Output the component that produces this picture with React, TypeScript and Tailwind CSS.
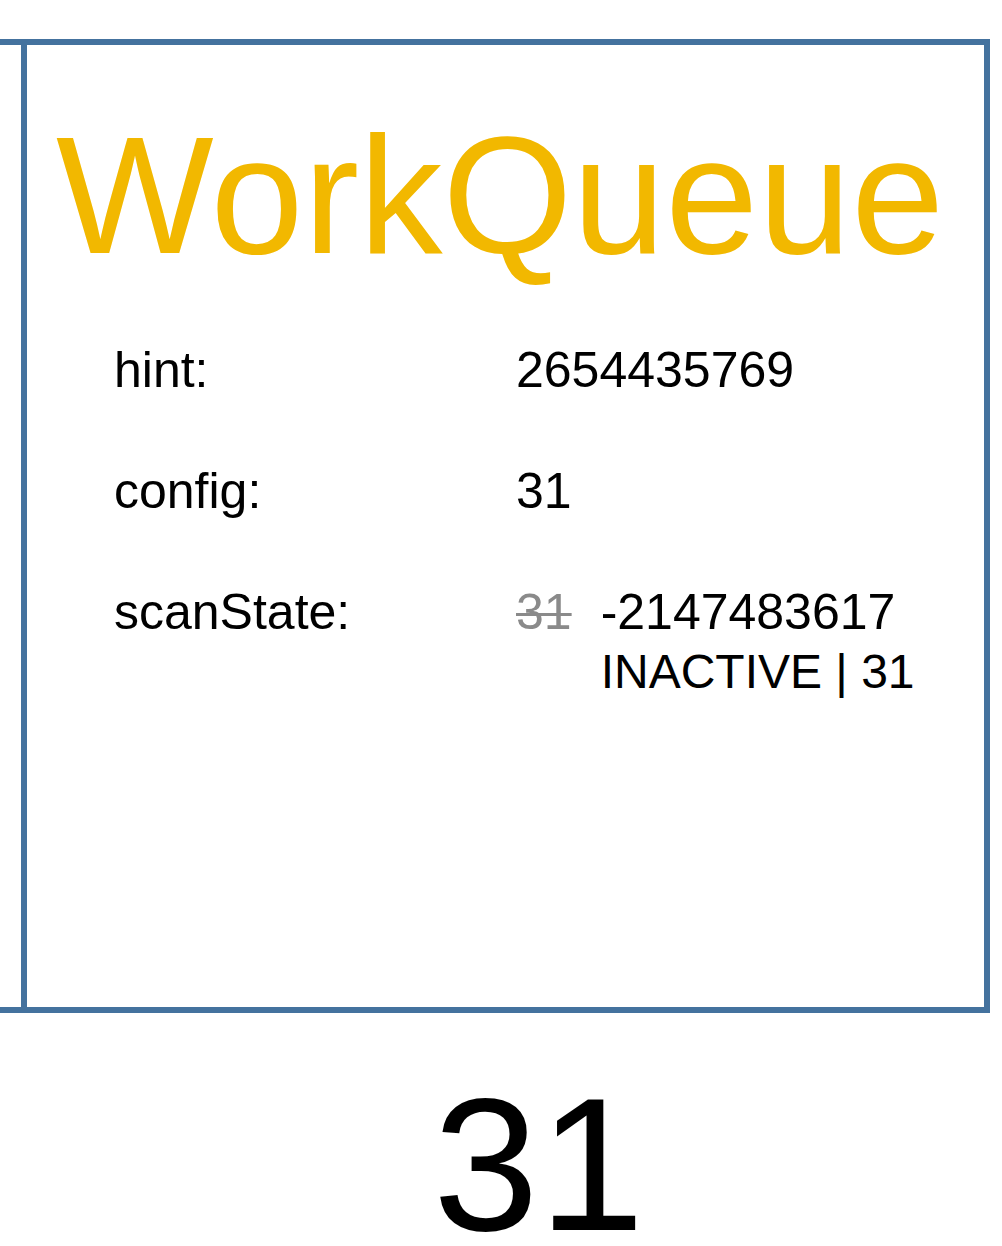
import React from "react";

const rows = [
  { label: "hint:", value: "2654435769" },
  { label: "config:", value: "31" },
];

export default function App() {
  return (
    <div className="min-h-[1246px] overflow-hidden bg-white text-black font-['Liberation_Sans',Arial,sans-serif]">
      <div className="h-[39px]" />

      {/* Queue panel (previous panel's edge peeks in on the left) */}
      <div className="flex w-[990px] border-y-[6px] border-r-[6px] border-[#44729e]">
        <div className="w-[21px] shrink-0" />
        <div className="flex-1 border-l-[6px] border-[#44729e] h-[962px] pt-[67px]">
          <h1 className="pl-[29px] text-[167px] leading-none text-[#f2b800] whitespace-nowrap">
            WorkQueue
          </h1>

          <div className="mt-[61px] pl-[87px] grid grid-cols-[402px_1fr] gap-y-[61px] text-[50px] leading-[60px]">
            {rows.map((row) => (
              <React.Fragment key={row.label}>
                <div>{row.label}</div>
                <div>{row.value}</div>
              </React.Fragment>
            ))}
            <div>scanState:</div>
            <div className="flex gap-[29px]">
              <span className="text-[#8a8a8a] line-through decoration-[3px]">31</span>
              <div className="flex flex-col">
                <span>-2147483617</span>
                <span className="text-[48px]">INACTIVE | 31</span>
              </div>
            </div>
          </div>
        </div>
      </div>

      <div className="mt-[76px] pl-[433px] text-[190px] leading-[150px]">31</div>
    </div>
  );
}
